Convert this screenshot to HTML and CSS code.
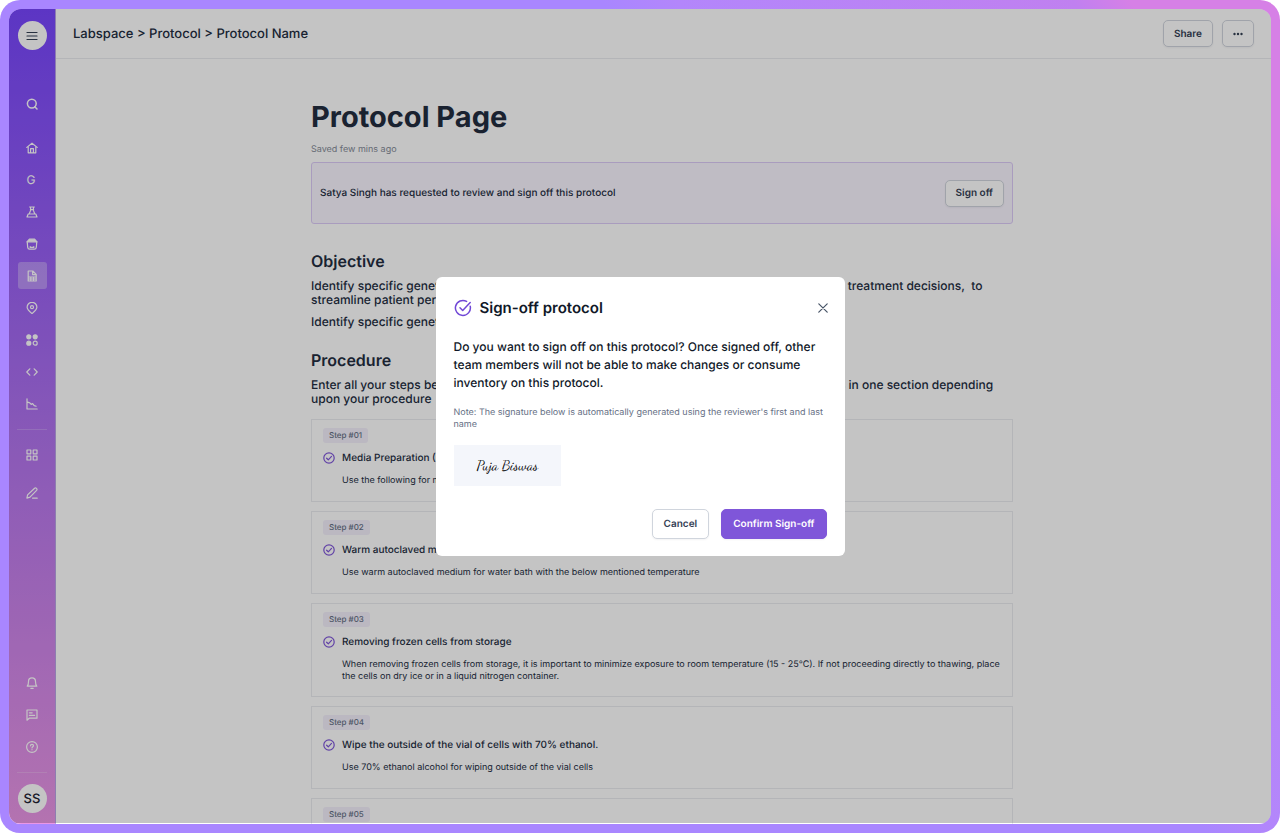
FILE: index.html
```html
<!DOCTYPE html>
<html lang="en">
<head>
    <meta charset="UTF-8">
    <meta name="viewport" content="width=device-width, initial-scale=1.0">
    <title>Protocol Page</title>
    <link rel="stylesheet" href="styles.css">
</head>
<body>
<svg class="sprite" aria-hidden="true">
    <symbol id="check" viewBox="0 0 12 12">
        <circle cx="6" cy="6" r="5.2"/>
        <path d="M3.6 6.2l1.7 1.6 3.2-3.4"/>
    </symbol>
</svg>
<div class="frame">
    <div class="app">
        <nav class="sidebar">
            <button class="round menu-btn" type="button" aria-label="Menu">
                <svg class="icon" viewBox="0 0 12 12"><path d="M1 2.5h10M1 6h10M1 9.5h10"/></svg>
            </button>
            <a class="nav-item search" href="#" aria-label="Search">
                <svg class="icon bold" viewBox="0 0 12 12"><circle cx="5.8" cy="5.6" r="4.4"/><path d="M8.8 8.8l2.2 2.2"/></svg>
            </a>
            <div class="nav-group">
                <a class="nav-item" href="#" aria-label="Home">
                    <svg class="icon" viewBox="0 0 12 12"><path d="M.8 5.4L6 1.2l5.2 4.2M2.2 4.6v6.2h7.6V4.6M4.6 10.8V6.6h2.8v4.2"/></svg>
                </a>
                <a class="nav-item letter" href="#">G</a>
                <a class="nav-item" href="#" aria-label="Experiments">
                    <svg class="icon" viewBox="0 0 12 12"><path d="M3.6 1h4.8M4.6 1v3.4L3.2 8M7.4 1v3.4L8.8 8M4.4 3.6h3.2M2.2 8h7.6l1.2 3H1z"/></svg>
                </a>
                <a class="nav-item" href="#" aria-label="Inventory">
                    <svg class="icon" viewBox="0 0 12 12"><path d="M3.4 1.2h5.2L11 3.8H1z" fill="currentColor"/><path d="M1.2 3.8l.5 5.6q.2 1.8 1.9 1.8h4.8q1.7 0 1.9-1.8l.5-5.6M4.2 8.6v.8h3.6v-.8"/></svg>
                </a>
                <a class="nav-item active" href="#" aria-label="Protocols">
                    <svg class="icon" viewBox="0 0 12 12"><path d="M2.2 1h4.6l3.4 3.4V11h-8zM6.6 1v3.6h3.6M2.2 7h8M2.2 9h8M4.8 7v4M7.5 7v4"/></svg>
                </a>
                <a class="nav-item" href="#" aria-label="Locations">
                    <svg class="icon" viewBox="0 0 12 12"><path d="M6 11.6C3 9 1.1 7.2 1.1 5.2a4.9 4.9 0 0 1 9.8 0C10.9 7.2 9 9 6 11.6z"/><circle cx="6" cy="5.2" r="1.5"/></svg>
                </a>
                <a class="nav-item" href="#" aria-label="Collections">
                    <svg class="icon" viewBox="0 0 12 12"><g fill="currentColor"><circle cx="2.8" cy="2.8" r="2"/><circle cx="9.2" cy="2.8" r="2"/><circle cx="2.8" cy="9.2" r="2"/></g><circle cx="9.2" cy="9.2" r="2"/></svg>
                </a>
                <a class="nav-item" href="#" aria-label="Code">
                    <svg class="icon" viewBox="0 0 12 12"><path d="M3.8 2.8L.8 6l3 3.2M8.2 2.8l3 3.2-3 3.2"/></svg>
                </a>
                <a class="nav-item" href="#" aria-label="Analytics">
                    <svg class="icon" viewBox="0 0 12 12"><path d="M1 .8V11h10.2M1.6 4.2l2.2.6 1.4 1.6 1.4-.8 1.6 2 2 .6"/></svg>
                </a>
            </div>
            <hr class="divider">
            <div class="nav-tools">
                <a class="nav-item" href="#" aria-label="Apps">
                    <svg class="icon" viewBox="0 0 12 12"><path d="M1 1h3.8v3.8H1zM7.2 1H11v3.8H7.2zM1 7.2h3.8V11H1zM7.2 7.2H11V11H7.2z"/></svg>
                </a>
                <a class="nav-item" href="#" aria-label="Edit">
                    <svg class="icon" viewBox="0 0 12 12"><path d="M.9 11.1l.7-3.2 7-6.7q.9-.7 1.9.2t.1 1.9L4 10.2zM6.6 11.2h4.6"/></svg>
                </a>
            </div>
            <div class="nav-group nav-bottom">
                <a class="nav-item" href="#" aria-label="Notifications">
                    <svg class="icon" viewBox="0 0 12 12"><path d="M1.2 9.2h9.6C9.6 8 9.5 6.8 9.5 4.4a3.5 3.5 0 0 0-7 0c0 2.4-.1 3.6-1.3 4.8zM4.8 11.3h2.4"/></svg>
                </a>
                <a class="nav-item" href="#" aria-label="Comments">
                    <svg class="icon" viewBox="0 0 12 12"><path d="M1 1h10v8.2H3.2l-2.2 2zM3.4 3.8h2.8M3.4 6.4h5.2"/></svg>
                </a>
                <a class="nav-item" href="#" aria-label="Help">
                    <svg class="icon" viewBox="0 0 12 12"><circle cx="6" cy="6" r="5.4"/><path d="M4.5 4.8c0-2 3-2 3 0 0 1-1.5 1.1-1.5 2.2M6 8.6v.2"/></svg>
                </a>
            </div>
            <hr class="divider">
            <button class="round avatar" type="button">SS</button>
        </nav>

        <div class="page">
            <header class="topbar">
                <div class="breadcrumb">Labspace &gt; Protocol &gt; Protocol Name</div>
                <div class="actions">
                    <button class="btn" type="button">Share</button>
                    <button class="btn more" type="button" aria-label="More">
                        <svg class="icon" viewBox="0 0 12 12"><g fill="currentColor" stroke="none"><circle cx="2.5" cy="6" r="1.2"/><circle cx="6" cy="6" r="1.2"/><circle cx="9.5" cy="6" r="1.2"/></g></svg>
                    </button>
                </div>
            </header>

            <main class="content">
                <h1>Protocol Page</h1>
                <p class="saved">Saved few mins ago</p>
                <div class="banner">
                    <span>Satya Singh has requested to review and sign off this protocol</span>
                    <button class="btn" type="button">Sign off</button>
                </div>

                <h2>Objective</h2>
                <p class="text">Identify specific genetic mutations in the patient samples to guide the most effective and fair&nbsp; treatment decisions,&nbsp; to<br>streamline patient personalised care</p>
                <p class="text">Identify specific genetic mutations</p>

                <h2 class="procedure">Procedure</h2>
                <p class="text">Enter all your steps below in order of use. You can combine the several relevant smaller steps in one section depending<br>upon your procedure</p>

                <div class="steps">
                    <section class="step">
                        <span class="tag">Step #01</span>
                        <h3><svg class="check"><use href="#check"/></svg>Media Preparation (RPMI)</h3>
                        <p>Use the following for media</p>
                    </section>
                    <section class="step">
                        <span class="tag">Step #02</span>
                        <h3><svg class="check"><use href="#check"/></svg>Warm autoclaved medium</h3>
                        <p>Use warm autoclaved medium for water bath with the below mentioned temperature</p>
                    </section>
                    <section class="step">
                        <span class="tag">Step #03</span>
                        <h3><svg class="check"><use href="#check"/></svg>Removing frozen cells from storage</h3>
                        <p>When removing frozen cells from storage, it is important to minimize exposure to room temperature (15 - 25°C). If not proceeding directly to thawing, place the cells on dry ice or in a liquid nitrogen container.</p>
                    </section>
                    <section class="step">
                        <span class="tag">Step #04</span>
                        <h3><svg class="check"><use href="#check"/></svg>Wipe the outside of the vial of cells with 70% ethanol.</h3>
                        <p>Use 70% ethanol alcohol for wiping outside of the vial cells</p>
                    </section>
                    <section class="step">
                        <span class="tag">Step #05</span>
                    </section>
                </div>
            </main>
        </div>

        <div class="overlay"></div>
    </div>

    <div class="modal-wrap">
        <div class="modal" role="dialog" aria-labelledby="modal-title">
            <div class="modal-head">
                <svg class="modal-icon" viewBox="0 0 18 18"><path d="M16.2 7.2a7.5 7.5 0 1 1-3.6-4.8"/><path d="M6 8.8l2.7 2.7 7.5-8"/></svg>
                <h2 id="modal-title">Sign-off protocol</h2>
                <button class="close" type="button" aria-label="Close">
                    <svg viewBox="0 0 10 10"><path d="M.8.8l8.4 8.4M9.2.8L.8 9.2"/></svg>
                </button>
            </div>
            <p class="question">Do you want to sign off on this protocol? Once signed off, other team members will not be able to make changes or consume inventory on this protocol.</p>
            <p class="note">Note: The signature below is automatically generated using the reviewer's first and last name</p>
            <div class="signature">Puja Biswas</div>
            <div class="modal-actions">
                <button class="btn" type="button">Cancel</button>
                <button class="btn primary" type="button">Confirm Sign-off</button>
            </div>
        </div>
    </div>
</div>
</body>
</html>
```

FILE: styles.css
```css
* {
    box-sizing: border-box;
}

body {
    margin: 0;
    padding: 0 1px 1px 0;
    height: 100vh;
    font-family: Inter, "Liberation Sans", sans-serif;
    text-rendering: geometricPrecision;
    color: #232d3f;
    background-color: #fff;
}

h1, h2, h3, p {
    margin: 0;
}

button {
    font-family: inherit;
    text-rendering: inherit;
    cursor: pointer;
}

.sprite {
    display: none;
}

.frame {
    position: relative;
    height: 100%;
    padding: 9px;
    border-radius: 20px;
    background: linear-gradient(234deg, #d680e6 8%, #c080f0 11%, #b386fb 32%, #a986ff 36%);
}

.app {
    position: relative;
    display: flex;
    height: 100%;
    border-radius: 12px;
    overflow: hidden;
    background-color: #fff;
}

.overlay {
    position: absolute;
    inset: 0 0 1px 0;
    background-color: rgba(0, 0, 0, 0.23);
}

/* sidebar */
.sidebar {
    display: flex;
    flex-direction: column;
    align-items: center;
    flex: none;
    width: 47px;
    padding: 12px 0 11px;
    border-right: 1px solid #b9a3e6;
    background: linear-gradient(#7846ff, #af72f0 50%, #ea96e6);
}

.round {
    display: flex;
    align-items: center;
    justify-content: center;
    flex: none;
    width: 29px;
    height: 29px;
    padding: 0;
    border: none;
    border-radius: 50%;
    background-color: #fff;
    color: #344054;
}

.avatar {
    font-size: 13px;
    font-weight: 500;
    color: #1d2433;
}

.icon {
    width: 12px;
    height: 12px;
    fill: none;
    stroke: currentColor;
    stroke-width: 1.2;
    stroke-linecap: round;
    stroke-linejoin: round;
}

.icon.bold {
    stroke-width: 1.5;
}

.nav-item {
    display: flex;
    align-items: center;
    justify-content: center;
    flex: none;
    width: 29px;
    height: 27px;
    border-radius: 3px;
    color: #fff;
    text-decoration: none;
}

.nav-item.active {
    background-color: rgba(255, 255, 255, 0.3);
}

.nav-item.letter {
    padding-right: 2px;
    font-size: 12px;
}

.search {
    margin: 40px 0 17px;
}

.nav-group {
    display: flex;
    flex-direction: column;
    gap: 5px;
}

.divider {
    flex: none;
    width: 30px;
    height: 1px;
    margin: 12px 0 11px;
    border: none;
    background-color: rgba(255, 255, 255, 0.2);
}

.nav-tools {
    display: flex;
    flex-direction: column;
    gap: 11px;
}

.nav-bottom {
    margin-top: auto;
}

/* page */
.page {
    flex: 1;
    min-width: 0;
}

.topbar {
    display: flex;
    align-items: center;
    justify-content: space-between;
    height: 50px;
    padding: 0 17px;
    border-bottom: 1px solid #eaecf0;
}

.breadcrumb {
    font-size: 13px;
    font-weight: 500;
}

.actions {
    display: flex;
    gap: 9px;
}

.btn {
    height: 27px;
    padding: 0 10px;
    border: 1px solid #d0d5dd;
    border-radius: 5px;
    background-color: #fff;
    box-shadow: 0 1px 2px rgba(16, 24, 40, 0.05);
    font-size: 10px;
    font-weight: 600;
    color: #344054;
}

.more {
    display: flex;
    align-items: center;
    padding: 0 9px;
}

.content {
    max-width: 705px;
    margin: 0 auto;
    padding: 40px 3px 0 0;
}

h1 {
    font-size: 29px;
    line-height: 36px;
    font-weight: 700;
}

.saved {
    margin: 9px 0 6px;
    font-size: 9px;
    line-height: 12px;
    color: #858b98;
}

.banner {
    display: flex;
    align-items: center;
    justify-content: space-between;
    height: 62px;
    padding: 0 8px;
    border: 1px solid #dccbf8;
    border-radius: 3px;
    background-color: #f9f5ff;
    font-size: 10px;
    font-weight: 500;
}

.content h2 {
    margin: 27px 0 8px;
    font-size: 16px;
    line-height: 20px;
    font-weight: 600;
}

.content .procedure {
    margin-top: 21px;
}

.text {
    margin-bottom: 8px;
    font-size: 12px;
    line-height: 14px;
    font-weight: 500;
}

.steps {
    display: flex;
    flex-direction: column;
    gap: 9px;
    margin-top: 13px;
}

.step {
    display: flex;
    flex-direction: column;
    align-items: flex-start;
    min-height: 83px;
    padding: 8px 11px 13px;
    border: 1px solid #eaecf0;
}

.tag {
    padding: 0 6px;
    border-radius: 3px;
    background-color: #f4f0fc;
    font-size: 8px;
    line-height: 15px;
    font-weight: 500;
    color: #667085;
}

.step h3 {
    display: flex;
    align-items: center;
    gap: 7px;
    margin: 8px 0 10px;
    font-size: 10px;
    line-height: 14px;
    font-weight: 500;
}

.step p {
    padding-left: 19px;
    font-size: 9px;
    line-height: 12px;
}

.check {
    width: 12px;
    height: 12px;
    fill: none;
    stroke: #7f56d9;
    stroke-width: 1.2;
    stroke-linecap: round;
    stroke-linejoin: round;
}

/* sign-off dialog */
.modal-wrap {
    position: absolute;
    inset: 0;
    display: flex;
    align-items: center;
    justify-content: center;
}

.modal {
    width: 409px;
    padding: 18px 18px 17px;
    border-radius: 6px;
    background-color: #fff;
    color: #101828;
}

.modal-head {
    display: flex;
    align-items: center;
    gap: 8px;
}

.modal-head h2 {
    font-size: 15px;
    line-height: 26px;
    font-weight: 600;
}

.modal-icon {
    width: 18px;
    height: 18px;
    fill: none;
    stroke: #7047d6;
    stroke-width: 1.5;
    stroke-linecap: round;
    stroke-linejoin: round;
}

.close {
    display: flex;
    margin: 0 -1px 0 auto;
    padding: 0;
    border: none;
    background: none;
}

.close svg {
    width: 10px;
    height: 10px;
    fill: none;
    stroke: #475467;
    stroke-width: 1.2;
    stroke-linecap: round;
}

.question {
    margin-top: 17px;
    font-size: 12px;
    line-height: 18px;
    font-weight: 500;
}

.note {
    margin-top: 15px;
    font-size: 9px;
    line-height: 12px;
    color: #667085;
}

.signature {
    display: inline-block;
    margin-top: 14px;
    padding: 0 23px;
    background-color: #f4f6fb;
    font-family: "Dancing Script", cursive;
    font-size: 14px;
    line-height: 41px;
    color: #000;
}

.modal-actions {
    display: flex;
    justify-content: flex-end;
    gap: 12px;
    margin-top: 23px;
}

.modal-actions .btn {
    height: 30px;
    padding: 0 11px;
}

.modal-actions .primary {
    border-color: #7f56d9;
    background-color: #7f56d9;
    color: #fff;
}
```
